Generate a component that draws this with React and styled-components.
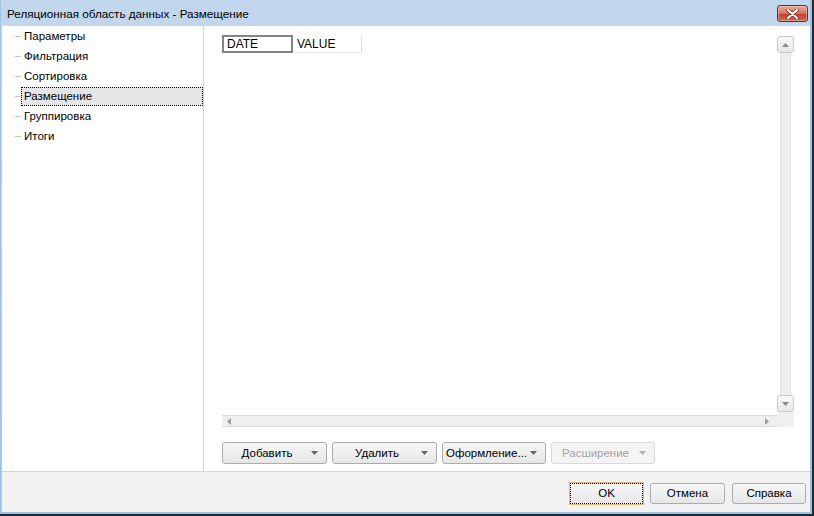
import React from 'react'
import styled, { createGlobalStyle } from 'styled-components'

const Global = createGlobalStyle`
  html, body { margin: 0; padding: 0; background: #fff; }
  body { font-family: "Liberation Sans", Arial, sans-serif; font-size: 11.5px; color: #000; }
`;

const Window = styled.div`
  width: 814px;
  height: 516px;
  box-sizing: border-box;
  display: flex;
  flex-direction: column;
  background: linear-gradient(#c2d7ed, #afc9e6);
  border-right: 2px solid #1f2a35;
  border-bottom: 2px solid #1f2a35;
  box-shadow: inset -2px -2px 0 #9cc4e4, inset 1px 0 0 #9cc4e4;
`;

const TitleBar = styled.div`
  height: 26px;
  display: flex;
  align-items: center;
  justify-content: space-between;
  padding: 0 4px 0 7px;
  flex-shrink: 0;
`;

const Title = styled.div`
  font-size: 11.7px;
  color: #000;
`;

const CloseBtn = styled.div`
  width: 31px;
  height: 17px;
  box-sizing: border-box;
  margin-top: 1px;
  border: 1px solid #6e2a22;
  border-radius: 3px;
  background: linear-gradient(#e9a99a, #d6715f 50%, #c2402c 55%, #d26a55);
  display: flex;
  align-items: center;
  justify-content: center;
  box-shadow: inset 0 0 0 1px rgba(255,255,255,0.35);
`;

const Client = styled.div`
  flex: 1;
  display: flex;
  flex-direction: column;
  margin: 0 2px 2px 2px;
  background: #fff;
`;

const Main = styled.div`
  flex: 1;
  display: flex;
  min-height: 0;
`;

const TreePanel = styled.div`
  width: 201px;
  border-right: 1px solid #d3d3d3;
  display: flex;
  flex-direction: column;
`;

const TreeItem = styled.div`
  height: 20px;
  display: flex;
  align-items: center;
  padding-left: 13px;
`;

const Dash = styled.span`
  width: 6px;
  height: 1px;
  background: #c4c4c4;
  flex-shrink: 0;
`;

const Label = styled.span`
  flex: 1;
  height: 19px;
  display: flex;
  align-items: center;
  padding-left: 2px;
  box-sizing: border-box;
  border: 1px dotted ${({ selected }) => (selected ? '#000' : 'transparent')};
  background: ${({ selected }) => (selected ? '#e5e5e5' : 'transparent')};
`;

const RightPanel = styled.div`
  flex: 1;
  display: flex;
  flex-direction: column;
  padding: 9px 16px 7px 18px;
`;

const Grid = styled.div`
  flex: 1;
  display: flex;
  flex-direction: column;
`;

const GridTop = styled.div`
  flex: 1;
  display: flex;
`;

const GridBody = styled.div`
  flex: 1;
`;

const HeaderRow = styled.div`
  display: flex;
  height: 18px;
`;

const HeaderCell = styled.div`
  width: ${({ w }) => w}px;
  box-sizing: border-box;
  display: flex;
  align-items: center;
  padding-left: 3px;
  font-size: 12px;
  border: ${({ focused }) => (focused ? '2px solid #80858a' : 'none')};
  ${({ focused }) => !focused && `border-right: 1px solid #dcdcdc; border-bottom: 1px solid #e6e6e6; padding-left: 4px;`}
`;

const VScroll = styled.div`
  width: 17px;
  display: flex;
  flex-direction: column;
  align-items: center;
`;

const ScrollBtn = styled.div`
  width: 17px;
  height: 17px;
  box-sizing: border-box;
  border: 1px solid #c8c8c8;
  border-radius: 3px;
  background: linear-gradient(#f9f9f9, #e8e8e8);
  display: flex;
  align-items: center;
  justify-content: center;
  flex-shrink: 0;
`;

const VTrack = styled.div`
  flex: 1;
  width: 9px;
  background: #eeeeee;
  border-left: 1px solid #e2e2e2;
  border-right: 1px solid #e2e2e2;
`;

const HRow = styled.div`
  display: flex;
  height: 15px;
`;

const HScroll = styled.div`
  flex: 1;
  margin-top: 3px;
  height: 10px;
  background: #efefef;
  border-top: 1px solid #dcdcdc;
  border-bottom: 1px solid #dcdcdc;
  display: flex;
  align-items: center;
  justify-content: space-between;
  padding: 0 8px 0 5px;
`;

const Corner = styled.div`
  width: 17px;
  background: #f0f0f0;
`;

const ButtonRow = styled.div`
  display: flex;
  gap: 5px;
  margin-top: 15px;
  height: 22px;
`;

const DropButton = styled.div`
  width: ${({ w }) => w}px;
  box-sizing: border-box;
  border: 1px solid ${({ disabled }) => (disabled ? '#d9d9d9' : '#acacac')};
  border-radius: 3px;
  background: ${({ disabled }) => (disabled ? '#f4f4f4' : 'linear-gradient(#f7f7f7, #e6e6e6)')};
  color: ${({ disabled }) => (disabled ? '#a3a3a3' : '#000')};
  display: flex;
  align-items: center;
  font-size: 11.5px;
  padding-right: 8px;
`;

const DropText = styled.span`
  flex: 1;
  text-align: center;
`;

const Footer = styled.div`
  height: 41px;
  flex-shrink: 0;
  box-sizing: border-box;
  background: #f2f2f2;
  border-top: 1px solid #d5d5d5;
  display: flex;
  justify-content: flex-end;
  align-items: center;
  gap: 7px;
  padding: 2px 4px 0 0;
`;

const DlgButton = styled.div`
  width: ${({ w }) => w}px;
  height: 21px;
  box-sizing: border-box;
  border: 1px ${({ focused }) => (focused ? 'dotted #000' : 'solid #acacac')};
  border-radius: ${({ focused }) => (focused ? '0' : '3px')};
  background: linear-gradient(#f7f7f7, #e6e6e6);
  box-shadow: ${({ focused }) => (focused ? '0 0 0 1px #e9b878' : 'none')};
  display: flex;
  align-items: center;
  justify-content: center;
  font-size: 11.5px;
`;

const Arrow = ({ dir = 'down', color = '#777' }) => (
  <svg width="7" height="4" viewBox="0 0 7 4" style={{ transform: dir === 'up' ? 'rotate(180deg)' : 'none' }}>
    <path d="M0 0h7L3.5 4z" fill={color} />
  </svg>
)

const SideArrow = ({ dir }) => (
  <svg width="4" height="7" viewBox="0 0 4 7">
    <path d={dir === 'left' ? 'M4 0v7L0 3.5z' : 'M0 0v7l4-3.5z'} fill="#999" />
  </svg>
)

const items = ['Параметры', 'Фильтрация', 'Сортировка', 'Размещение', 'Группировка', 'Итоги']

export default function App() {
  return (
    <>
      <Global />
      <Window>
        <TitleBar>
          <Title>Реляционная область данных - Размещение</Title>
          <CloseBtn>
            <svg width="13" height="10" viewBox="0 0 13 10">
              <path d="M2 1l9 8M11 1l-9 8" stroke="#6b2a20" strokeWidth="3.4" strokeLinecap="round" />
              <path d="M2 1l9 8M11 1l-9 8" stroke="#fff" strokeWidth="2" strokeLinecap="round" />
            </svg>
          </CloseBtn>
        </TitleBar>
        <Client>
          <Main>
            <TreePanel>
              {items.map(t => (
                <TreeItem key={t}>
                  <Dash />
                  <Label selected={t === 'Размещение'}>{t}</Label>
                </TreeItem>
              ))}
            </TreePanel>
            <RightPanel>
              <Grid>
                <GridTop>
                  <GridBody>
                    <HeaderRow>
                      <HeaderCell w={71} focused>DATE</HeaderCell>
                      <HeaderCell w={69}>VALUE</HeaderCell>
                    </HeaderRow>
                  </GridBody>
                  <VScroll>
                    <ScrollBtn style={{ marginTop: 1 }}><Arrow dir="up" color="#888" /></ScrollBtn>
                    <VTrack />
                    <ScrollBtn><Arrow color="#888" /></ScrollBtn>
                  </VScroll>
                </GridTop>
                <HRow>
                  <HScroll>
                    <SideArrow dir="left" />
                    <SideArrow dir="right" />
                  </HScroll>
                  <Corner />
                </HRow>
              </Grid>
              <ButtonRow>
                <DropButton w={105}><DropText>Добавить</DropText><Arrow color="#666" /></DropButton>
                <DropButton w={105}><DropText>Удалить</DropText><Arrow color="#666" /></DropButton>
                <DropButton w={104}><DropText>Оформление...</DropText><Arrow color="#666" /></DropButton>
                <DropButton w={104} disabled><DropText>Расширение</DropText><Arrow color="#b0b0b0" /></DropButton>
              </ButtonRow>
            </RightPanel>
          </Main>
          <Footer>
            <DlgButton w={73} focused>OK</DlgButton>
            <DlgButton w={75}>Отмена</DlgButton>
            <DlgButton w={74}>Справка</DlgButton>
          </Footer>
        </Client>
      </Window>
    </>
  )
}
